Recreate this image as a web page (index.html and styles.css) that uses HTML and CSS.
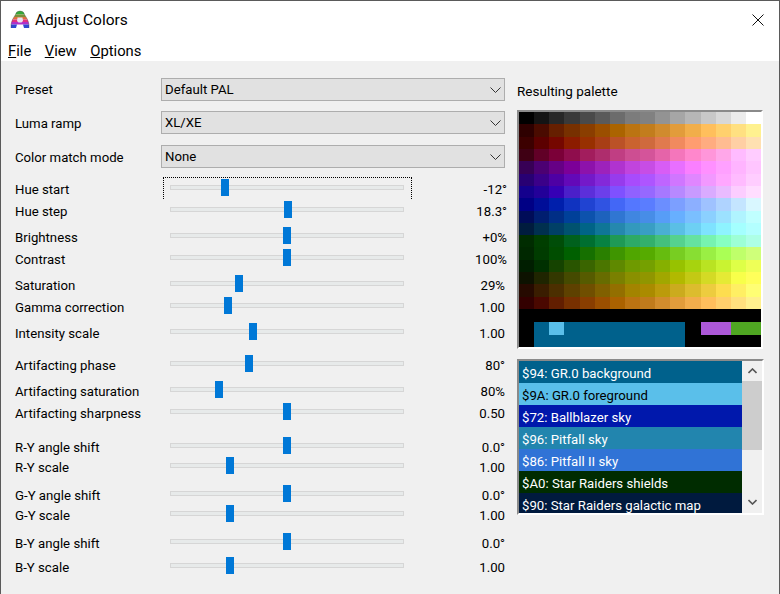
FILE: index.html
```html
<!doctype html>
<html>
<head>
    <meta charset="utf-8">
    <title>Adjust Colors</title>
    <link rel="stylesheet" href="styles.css">
</head>
<body>
    <div class="window">
        <div class="titlebar">
            <svg class="app-icon" width="20" height="20" viewBox="0 0 20 20">
                <path d="M5.5 4.5 Q6 1 10 1 Q14 1 14.5 4.5 Z" fill="#35a838"/>
                <path d="M4 7 L5.5 4.5 H14.5 L16 7 Z" fill="#7d8f3a"/>
                <path d="M2.5 9.5 L4 7 H16 L17.5 9.5 Z" fill="#e0703c"/>
                <path d="M1.5 12 L2.5 9.5 H17.5 L18.5 12 Z" fill="#e22f80"/>
                <path d="M1 14.5 L1.5 12 H18.5 L19 14.5 Z" fill="#b030c8"/>
                <path d="M1 18 L1 14.5 H7 L6 18 Z M13 14.5 H19 L19 18 H14 Z" fill="#3048d0"/>
                <path d="M7.5 7.5 H12.5 L13 11 L11.5 12.5 H8.5 L7 11 Z" fill="#e8e4f0"/>
                <path d="M1 18 L1 14.5 L2.5 9.5 L5.5 4.5 Q6 1 10 1 Q14 1 14.5 4.5 L17.5 9.5 L19 14.5 L19 18" fill="none" stroke="#444" stroke-width=".6" stroke-opacity=".6"/>
            </svg>
            <span class="title">Adjust Colors</span>
            <svg class="close" width="12" height="12" viewBox="0 0 12 12">
                <path d="M.5 .5 L11.5 11.5 M11.5 .5 L.5 11.5" stroke="#111" stroke-width="1" fill="none"/>
            </svg>
        </div>
        <div class="menubar">
            <span><u>F</u>ile</span>
            <span><u>V</u>iew</span>
            <span><u>O</u>ptions</span>
        </div>
        <div class="client">
            <div class="form">
                <div class="label combo-label">Preset</div>
                <div class="combo"><span class="combo-text">Default PAL</span><svg width="11" height="6" viewBox="0 0 11 6"><path d="M.5 .5 L5.5 5.5 L10.5 .5" fill="none" stroke="#333"/></svg></div>
                <div class="label combo-label low">Luma ramp</div>
                <div class="combo"><span class="combo-text">XL/XE</span><svg width="11" height="6" viewBox="0 0 11 6"><path d="M.5 .5 L5.5 5.5 L10.5 .5" fill="none" stroke="#333"/></svg></div>
                <div class="label combo-label low">Color match mode</div>
                <div class="combo"><span class="combo-text">None</span><svg width="11" height="6" viewBox="0 0 11 6"><path d="M.5 .5 L5.5 5.5 L10.5 .5" fill="none" stroke="#333"/></svg></div>

                <div class="label">Hue start</div>
                <div class="slider focused"><div class="track"></div><div class="thumb" style="left:60px"></div></div>
                <div class="value">-12°</div>
                <div class="label">Hue step</div>
                <div class="slider"><div class="track"></div><div class="thumb" style="left:123px"></div></div>
                <div class="value">18.3°</div>
                <div class="label">Brightness</div>
                <div class="slider"><div class="track"></div><div class="thumb" style="left:122px"></div></div>
                <div class="value">+0%</div>
                <div class="label">Contrast</div>
                <div class="slider"><div class="track"></div><div class="thumb" style="left:122px"></div></div>
                <div class="value">100%</div>
                <div class="label">Saturation</div>
                <div class="slider"><div class="track"></div><div class="thumb" style="left:74px"></div></div>
                <div class="value inset">29%</div>
                <div class="label">Gamma correction</div>
                <div class="slider"><div class="track"></div><div class="thumb" style="left:63px"></div></div>
                <div class="value inset">1.00</div>
                <div class="label">Intensity scale</div>
                <div class="slider"><div class="track"></div><div class="thumb" style="left:88px"></div></div>
                <div class="value inset">1.00</div>
                <div class="label">Artifacting phase</div>
                <div class="slider"><div class="track"></div><div class="thumb" style="left:84px"></div></div>
                <div class="value inset">80°</div>
                <div class="label">Artifacting saturation</div>
                <div class="slider"><div class="track"></div><div class="thumb" style="left:54px"></div></div>
                <div class="value inset">80%</div>
                <div class="label">Artifacting sharpness</div>
                <div class="slider"><div class="track"></div><div class="thumb" style="left:122px"></div></div>
                <div class="value inset">0.50</div>
                <div class="label">R-Y angle shift</div>
                <div class="slider"><div class="track"></div><div class="thumb" style="left:122px"></div></div>
                <div class="value inset">0.0°</div>
                <div class="label">R-Y scale</div>
                <div class="slider"><div class="track"></div><div class="thumb" style="left:65px"></div></div>
                <div class="value inset">1.00</div>
                <div class="label">G-Y angle shift</div>
                <div class="slider"><div class="track"></div><div class="thumb" style="left:122px"></div></div>
                <div class="value inset">0.0°</div>
                <div class="label">G-Y scale</div>
                <div class="slider"><div class="track"></div><div class="thumb" style="left:65px"></div></div>
                <div class="value inset">1.00</div>
                <div class="label">B-Y angle shift</div>
                <div class="slider"><div class="track"></div><div class="thumb" style="left:122px"></div></div>
                <div class="value inset">0.0°</div>
                <div class="label">B-Y scale</div>
                <div class="slider"><div class="track"></div><div class="thumb" style="left:65px"></div></div>
                <div class="value inset">1.00</div>
            </div>
            <div class="side">
                <div class="side-title">Resulting palette</div>
                <div class="palette-frame">
                    <div class="palette" id="palette"></div>
                    <div class="preview">
                        <div class="preview-bg"><div class="preview-fg"></div></div>
                        <div class="preview-purple"></div>
                        <div class="preview-green"></div>
                    </div>
                </div>
                <div class="list-frame">
                    <div class="list">
                        <div class="item" style="background:#00618c">$94: GR.0 background</div>
                        <div class="item dark" style="background:#5abfea">$9A: GR.0 foreground</div>
                        <div class="item" style="background:#0018ac">$72: Ballblazer sky</div>
                        <div class="item" style="background:#2285ae">$96: Pitfall sky</div>
                        <div class="item" style="background:#3073d6">$86: Pitfall II sky</div>
                        <div class="item" style="background:#002c00">$A0: Star Raiders shields</div>
                        <div class="item" style="background:#001a3e">$90: Star Raiders galactic map</div>
                    </div>
                    <div class="scrollbar">
                        <svg class="arrow" width="9" height="6" viewBox="0 0 9 6"><path d="M.5 5 L4.5 1 L8.5 5" fill="none" stroke="#555" stroke-width="1.6"/></svg>
                        <div class="scroll-thumb"></div>
                        <div class="scroll-rest"></div>
                        <svg class="arrow" width="9" height="6" viewBox="0 0 9 6"><path d="M.5 1 L4.5 5 L8.5 1" fill="none" stroke="#555" stroke-width="1.6"/></svg>
                    </div>
                </div>
            </div>
        </div>
    </div>
    <script src="palette.js"></script>
</body>
</html>
```
FILE: styles.css
```css
* {
    margin: 0;
    padding: 0;
    box-sizing: border-box;
}
body {
    width: 780px;
    height: 594px;
    overflow: hidden;
    font-family: Roboto, "Liberation Sans", sans-serif;
    font-size: 13.2px;
    color: #000;
}
.window {
    width: 780px;
    height: 594px;
    display: flex;
    flex-direction: column;
    background: #f0f0f0;
    border: 1px solid #5a5a5a;
    border-bottom: 0;
}
.titlebar {
    height: 38px;
    flex: none;
    display: flex;
    align-items: center;
    background: #fff;
    padding-left: 9px;
}
.title {
    margin-left: 5px;
    font-size: 15.5px;
}
.close {
    margin-left: auto;
    margin-right: 15px;
}
.menubar {
    height: 22px;
    flex: none;
    display: flex;
    gap: 13.5px;
    padding-left: 7px;
    background: #fff;
    font-size: 14.8px;
    line-height: 24px;
}
.client {
    flex: 1;
    display: flex;
    min-height: 0;
}
.form {
    width: 516px;
    flex: none;
    padding: 17px 0 0 14px;
    display: grid;
    grid-template-columns: 146px 250px 96px;
    grid-template-rows: 33px 34px 34px 22px 26px 22px 26px 22px 26px 32px 26px 22px 34px 20px 28px 20px 28px 24px 20px;
}
.label {
    line-height: 18px;
    padding-top: 2px;
    white-space: nowrap;
}
.combo-label {
    line-height: 24px;
    padding-top: 0;
}
.combo-label.low {
    padding-top: 1px;
}
.combo {
    grid-column: 2 / 4;
    width: 344px;
    height: 23px;
    display: flex;
    align-items: center;
    justify-content: space-between;
    padding: 0 3px 0 3px;
    background: #e1e1e1;
    border: 1px solid #adadad;
}
.combo-text {
    margin-top: -1px;
}
.slider {
    position: relative;
    height: 17px;
}
.track {
    position: absolute;
    left: 9px;
    top: 6px;
    width: 234px;
    height: 5px;
    background: #e7eaea;
    border: 1px solid #d6d6d6;
}
.thumb {
    position: absolute;
    top: 0;
    width: 8px;
    height: 17px;
    background: #0078d7;
}
.focused::after {
    content: "";
    position: absolute;
    left: 2px;
    top: -2px;
    width: 247px;
    height: 21px;
    border: 1px dotted #000;
    border-bottom: 0;
}
.value {
    text-align: right;
    line-height: 18px;
    padding-top: 2px;
}
.value.inset {
    padding-right: 2px;
}
.side {
    padding-top: 21px;
}
.side-title {
    line-height: 18px;
    margin-bottom: 10px;
    font-size: 13.5px;
}
.palette-frame {
    width: 246px;
    border: 2px solid #fff;
    border-top-color: #8a8a8a;
    border-left-color: #8a8a8a;
}
.palette {
    display: grid;
    grid-template-columns: repeat(16, 1fr);
    grid-template-rows: repeat(16, 1fr);
    height: 197px;
}
.preview {
    height: 38px;
    display: flex;
    padding: 13px 0 0 15px;
    background: #000;
}
.preview-bg {
    width: 151px;
    height: 25px;
    margin-right: 16px;
    background: #00618c;
}
.preview-fg {
    width: 15px;
    height: 13px;
    margin-left: 15px;
    background: #5abfea;
}
.preview-purple,
.preview-green {
    width: 30px;
    height: 13px;
}
.preview-purple {
    background: #ac58d8;
}
.preview-green {
    background: #4fa622;
}
.list-frame {
    width: 247px;
    margin-top: 10px;
    display: flex;
    border: 2px solid #fff;
    border-top-color: #8a8a8a;
    border-left-color: #8a8a8a;
}
.list {
    width: 223px;
    height: 152px;
    overflow: hidden;
}
.item {
    height: 22px;
    line-height: 26px;
    padding-left: 3px;
    color: #fff;
    white-space: nowrap;
}
.item.dark {
    color: #000;
}
.scrollbar {
    width: 20px;
    height: 152px;
    display: flex;
    flex-direction: column;
    align-items: center;
    background: #f0f0f0;
}
.arrow {
    flex: none;
    margin: 7px 0 8px;
}
.scroll-thumb {
    width: 100%;
    height: 69px;
    margin-top: -1px;
    background: #cdcdcd;
}
.scroll-rest {
    flex: 1;
}
```
FILE: palette.js
```js
// palette colours, one row per hue
var rows = [
    "000000 141414 272727 393939 4a4a4a 5a5a5a 6c6c6c 7c7c7c 818181 939393 a6a6a6 b6b6b6 c8c8c8 d8d8d8 ececec ffffff",
    "2e0000 4a0b00 661f00 773000 8a3e00 9b4f00 ab6400 bb7412 c27d1d d08b2e e29c3b f1ae4a ffbf5c ffd06d ffe081 fff18f",
    "3c0000 5c0000 750700 8c1c00 983000 a83e15 bb5227 ca632f cf6a3d e07a4e f18a5e ff9d70 ffac80 ffbc91 ffcfa4 ffe0b1",
    "3f0014 610027 7b0038 8f0d4d a21d5d ae2d6d c03e83 cd4e92 d4549a e564a9 f476bb ff87cc ff96da ffa7e9 ffbbff ffccff",
    "370055 4c0072 660085 7c0098 8d12ab 9d22bb b033cf c144dd c74de5 d85df5 e86fff fa7fff ff90ff ffa0ff ffb4ff ffc5ff",
    "280073 3b0089 4e00a4 6309b8 7419c9 8429d9 973bec a84bfc ae55ff bf65ff d076ff e086ff f298ff ffa7ff ffbbff ffcdff",
    "14008d 230099 3600b5 4b1fc9 5c2fda 6c3fea 7f51ff 9061ff 9668ff a778ff b789ff c89aff daabff e9bbff fccdff ffddff",
    "000085 000e98 001fac 1033c0 2043d2 3053e2 4367f6 5477ff 5a7dff 6b8eff 7c9fff 8cafff 9fc2ff afd3ff c4e5ff d9f7ff",
    "000c58 001e70 002e86 004099 0d52ad 1d62bd 3076d2 4086e0 478de7 579df7 67afff 7abfff 8bd0ff 9ce1ff b0f4ff c0ffff",
    "001c3e 00304f 004066 00526f 006487 0f7697 2588ae 3399bd 399ec4 4aafd3 5abfe5 6dd0f3 7ee2ff 8ef3ff a4ffff b3ffff",
    "002c00 003e00 004d08 00611d 006f30 088242 1f9a56 2daa66 33b06c 44c07c 55d28f 65e2a0 77f3b1 87ffc1 9dffd6 adffe6",
    "002800 003c00 004d00 006000 167000 2a8000 3f9500 50a600 56ab00 66bc0f 78cd22 88de33 9aef44 aaff55 bfff6a cfff7a",
    "001e00 003000 154300 295500 3a6500 4b7600 5f8900 6f9a00 75a000 86b000 97c200 a7d30e b9e322 c9f331 deff47 eeff57",
    "0d1200 1f2500 333800 454a00 565b00 676c00 7a8000 8a9000 909600 a1a700 b2b900 c3c914 d4da25 e5ea35 f8ff4a ffff5a",
    "260a00 3a1d00 4c2f00 5e4100 704f00 806000 936f00 a38400 aa8b00 bb9b0b cbab1e dcbc2e edcc3f fddd4f ffef63 fffe74",
    "330000 4a0800 621e00 773000 893e00 9b4f00 ab6200 bb7312 c07b1c d18c2d e29c3b f2ad4c ffbe5c ffcf6c ffe07e fff08e"
];
var box = document.getElementById("palette");
for (var i = 0; i < rows.length; i++) {
    var cols = rows[i].split(" ");
    for (var j = 0; j < cols.length; j++) {
        var cell = document.createElement("div");
        cell.style.background = "#" + cols[j];
        box.appendChild(cell);
    }
}
```
